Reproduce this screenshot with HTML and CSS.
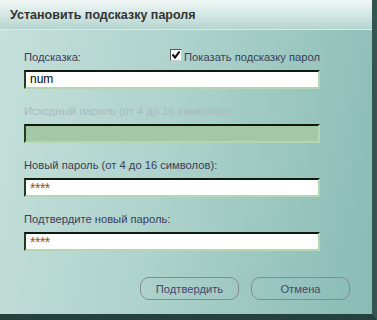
FILE: index.html
```html
<!DOCTYPE html>
<html lang="ru">
<head>
  <meta charset="UTF-8">
  <title>Установить подсказку пароля</title>
  <link rel="stylesheet" href="styles.css">
</head>
<body>
  <div class="window">
    <div class="title-bar">Установить подсказку пароля</div>
    <div class="content">
      <form class="hint-form">
        <div class="form-group">
          <div class="top-row">
            <label class="field-label hint-label" for="hint">Подсказка:</label>
            <label class="show-hint">
              <span class="checkbox">
                <svg width="8" height="8" viewBox="0 0 8 8"><path d="M0.5 3.5 L3 6.5 L7.5 0.5" fill="none" stroke="#000" stroke-width="2"/></svg>
              </span>
              <span class="show-text">Показать подсказку парол</span>
            </label>
          </div>
          <div class="input">num</div>
        </div>
        <div class="form-group">
          <div class="field-label disabled">Исходный пароль (от 4 до 16 символов)</div>
          <div class="input input-disabled"></div>
        </div>
        <div class="form-group">
          <div class="field-label">Новый пароль (от 4 до 16 символов):</div>
          <div class="input masked">****</div>
        </div>
        <div class="form-group">
          <div class="field-label">Подтвердите новый пароль:</div>
          <div class="input masked">****</div>
        </div>
      </form>
      <div class="buttons">
        <button type="button" class="btn">Подтвердить</button>
        <button type="button" class="btn">Отмена</button>
      </div>
    </div>
  </div>
</body>
</html>
```
FILE: styles.css
```css
body {
    margin: 0;
    font-family: "Liberation Sans", Arial, sans-serif;
    background: #2c4a46;
}
.window {
    width: 377px;
    height: 320px;
    box-sizing: border-box;
    border-right: 5px solid #34544f;
    border-bottom: 6px solid #24413d;
    background: linear-gradient(100deg, #c6e0db 0%, #aed2cc 45%, #88bcb4 100%);
    display: flex;
    flex-direction: column;
}
.title-bar {
    height: 30px;
    box-sizing: border-box;
    padding: 8px 0 0 10px;
    font-size: 12.5px;
    font-weight: bold;
    color: #333;
    background: linear-gradient(180deg, #f0f7f5 0%, #d6e9e5 45%, #b5d4cf 100%);
    border-bottom: 1px solid #d8ebe7;
}
.content {
    flex: 1;
    padding: 20px 0 0 24px;
}
.hint-form {
    width: 296px;
}
.form-group {
    margin-bottom: 15px;
}
.field-label {
    display: block;
    height: 14px;
    line-height: 14px;
    font-size: 11.2px;
    color: #3a3e58;
    margin-bottom: 6px;
    white-space: nowrap;
}
.field-label.disabled {
    color: #a7bbba;
}
.top-row {
    display: flex;
    align-items: flex-start;
}
.hint-label {
    width: 146px;
    flex: none;
}
.show-hint {
    display: flex;
    flex: 1;
    overflow: hidden;
    white-space: nowrap;
    height: 14px;
    margin-top: -1px;
    font-size: 11.2px;
    color: #3a3e58;
}
.checkbox {
    flex: none;
    width: 12px;
    height: 12px;
    box-sizing: border-box;
    background: #fff;
    border: 1px solid;
    border-color: #555 #ccc #ccc #555;
    display: flex;
    align-items: center;
    justify-content: center;
    margin-right: 2px;
}
.show-text {
    line-height: 14px;
    margin-top: 1px;
}
.input {
    height: 19px;
    box-sizing: border-box;
    background: #fff;
    border: 2px solid;
    border-color: #0d1a0d #b3d6b3 #b3d6b3 #223d22;
    padding-left: 4px;
    font-size: 12px;
    line-height: 15px;
    color: #000;
}
.input-disabled {
    background: #a3c8a3;
}
.masked {
    color: #8a5418;
    font-size: 14px;
    line-height: 17px;
    letter-spacing: -0.5px;
}
.buttons {
    display: flex;
    gap: 12px;
    padding: 11px 0 0 116px;
}
.btn {
    width: 99px;
    height: 23px;
    border: 1px solid #8a8a8a;
    border-radius: 9px;
    background: transparent;
    font-family: "Liberation Sans", Arial, sans-serif;
    font-size: 11.2px;
    color: #46466a;
    padding: 0;
}
```
